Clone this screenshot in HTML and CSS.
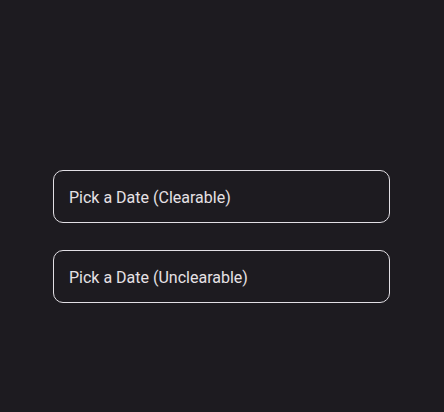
FILE: index.html
```html
<!DOCTYPE html>
<html>
<head>
<meta charset="utf-8">
<link rel="stylesheet" href="styles.css">
</head>
<body>
<div class="stack">
  <div class="field">Pick a Date (Clearable)</div>
  <div class="field">Pick a Date (Unclearable)</div>
</div>
</body>
</html>
```
FILE: styles.css
```css
html, body {
  margin: 0;
  padding: 0;
  background: #1d1b20;
  width: 444px;
  height: 412px;
  overflow: hidden;
}
.stack {
  display: flex;
  flex-direction: column;
  gap: 27px;
  padding: 170px 54px 0 53px;
}
.field {
  box-sizing: border-box;
  height: 53px;
  border: 1px solid #e2dfe4;
  border-radius: 10px;
  display: flex;
  align-items: center;
  padding: 1px 0 0 15px;
  font-family: Roboto, "Liberation Sans", sans-serif;
  font-size: 16px;
  color: #e6e1e5;
}
```
